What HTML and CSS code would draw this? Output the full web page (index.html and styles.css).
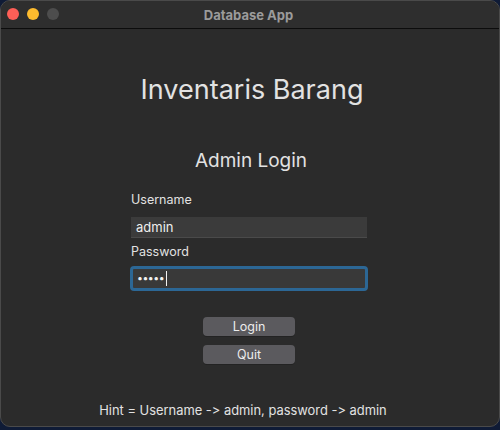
FILE: index.html
```html
<!DOCTYPE html>
<html>
<head>
<meta charset="utf-8">
<link rel="stylesheet" href="styles.css">
</head>
<body>
<div class="window">
  <div class="titlebar">
    <div class="lights">
      <span class="light red"></span>
      <span class="light yellow"></span>
      <span class="light gray"></span>
    </div>
    <div class="title">Database App</div>
  </div>
  <div class="content">
    <h1 class="heading">Inventaris Barang</h1>
    <h2 class="subheading">Admin Login</h2>
    <div class="form">
      <label class="label">Username</label>
      <div class="input">admin</div>
      <label class="label pw">Password</label>
      <div class="input focus"><span class="dots">•••••</span><span class="caret"></span></div>
    </div>
    <div class="buttons">
      <button class="btn">Login</button>
      <button class="btn">Quit</button>
    </div>
    <div class="hint">Hint = Username -&gt; admin, password -&gt; admin</div>
  </div>
</div>
</body>
</html>
```
FILE: styles.css
```css
* { box-sizing: border-box; }
html, body { margin: 0; padding: 0; }
body {
  width: 500px;
  height: 430px;
  background: #0f1b36;
  font-family: Inter, "Noto Sans", sans-serif;
  font-feature-settings: "calt" 0;
  font-variant-ligatures: none;
  overflow: hidden;
}
.window {
  width: 500px;
  height: 427px;
  background: #2b2b2b;
  border-radius: 10px;
  border: 1px solid #4a4a4a;
  overflow: hidden;
  display: flex;
  flex-direction: column;
}
.titlebar {
  height: 28px;
  flex: none;
  background: #2e2e2e;
  border-bottom: 1px solid #0c0c0c;
  position: relative;
  display: flex;
  align-items: center;
  justify-content: center;
}
.lights {
  position: absolute;
  left: 6px;
  top: 7px;
  display: flex;
  gap: 8px;
}
.light {
  width: 12px;
  height: 12px;
  border-radius: 50%;
  display: block;
}
.red { background: #fe5f57; }
.yellow { background: #febc2e; }
.gray { background: #4d4d4d; }
.title {
  color: #9b9b9b;
  font-weight: 700;
  font-size: 13px;
  margin-left: -3px;
}
.content {
  flex: 1;
  display: flex;
  flex-direction: column;
  align-items: center;
}
.heading {
  margin: 44px 0 0 0;
  font-weight: 400;
  font-size: 27px;
  line-height: 34px;
  color: #e2e2e2;
  padding-left: 4px;
}
.subheading {
  margin: 42px 0 0 0;
  font-weight: 400;
  font-size: 19px;
  line-height: 24px;
  color: #e2e2e2;
  padding-left: 2px;
}
.form {
  width: 238px;
  margin-top: 19px;
  margin-left: -2px;
  display: flex;
  flex-direction: column;
}
.label {
  font-size: 12.5px;
  color: #e2e2e2;
  line-height: 16px;
  padding-left: 1px;
}
.label.pw { margin-top: 6px; }
.input {
  margin-top: 9px;
  height: 21px;
  width: 236px;
  margin-left: 1px;
  background: #3b3b3b;
  border-bottom: 1px solid #4a4a4a;
  color: #eeeeee;
  font-size: 13px;
  line-height: 20px;
  padding-left: 5px;
}
.input.focus {
  margin-left: 0;
  margin-top: 6px;
  width: 238px;
  height: 25px;
  border: 3px solid #2c6795;
  border-radius: 4px;
  background: #393939;
  padding-left: 4px;
  display: flex;
  align-items: center;
}
.dots {
  color: #f2f2f2;
  font-size: 10.5px;
  letter-spacing: -0.5px;
  line-height: 12px;
}
.caret {
  display: inline-block;
  width: 1px;
  height: 15px;
  background: #f2f2f2;
  margin-left: 2px;
}
.buttons {
  margin-top: 26px;
  display: flex;
  flex-direction: column;
  gap: 9px;
  margin-left: -2px;
}
.btn {
  width: 92px;
  height: 19px;
  border: none;
  border-radius: 4px;
  background: #5b5a5e;
  color: #ececec;
  font-family: Inter, "Noto Sans", sans-serif;
  font-size: 12.5px;
  padding: 0;
  line-height: 19px;
  box-shadow: 0 1px 0 #232323;
}
.hint {
  margin-top: auto;
  margin-bottom: 8px;
  margin-right: 14px;
  font-size: 12.9px;
  color: #e2e2e2;
}
```
